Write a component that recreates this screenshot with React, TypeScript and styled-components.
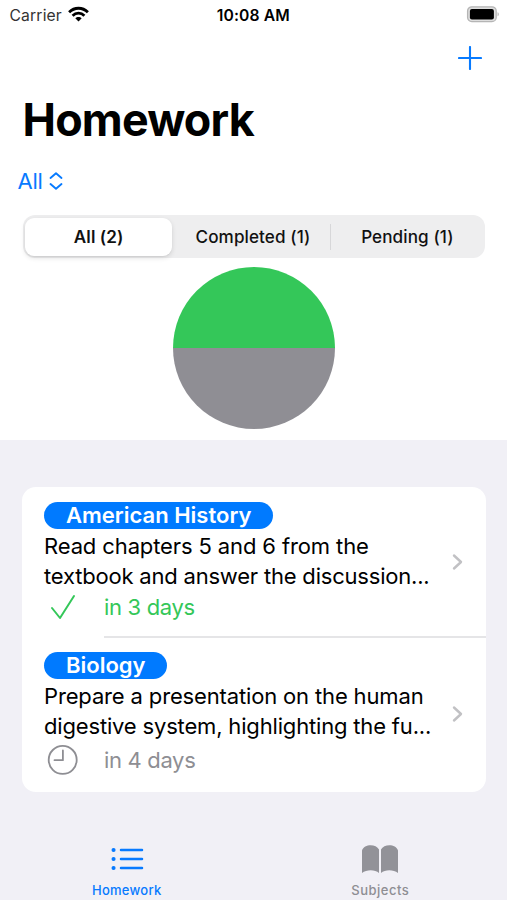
import React from "react";
import styled, { createGlobalStyle } from "styled-components";

const GlobalStyle = createGlobalStyle`
  * { box-sizing: border-box; }
  body { margin: 0; background: #fff; }
`;

const Screen = styled.div`
  width: 507px;
  height: 900px;
  overflow: hidden;
  display: flex;
  flex-direction: column;
  background: #f1f0f6;
  color: #000;
  font-family: Inter, "Liberation Sans", sans-serif;
  white-space: nowrap;
`;

const Top = styled.header`
  height: 440px;
  flex: none;
  display: flex;
  flex-direction: column;
  background: #fff;
`;

const StatusBar = styled.div`
  height: 30px;
  flex: none;
  display: grid;
  grid-template-columns: 1fr auto 1fr;
  align-items: center;
  padding: 0 8px 0 9.5px;
  font-size: 15.7px;
`;

const Carrier = styled.div`
  display: flex;
  align-items: center;
  gap: 6px;
  color: #333;
  letter-spacing: 0.14px;
  svg { margin-bottom: 2px; }
`;

const Time = styled.div`
  font-weight: 600;
  letter-spacing: 0.1px;
  margin-left: -2px;
`;

const Battery = styled.div`
  justify-self: end;
  display: flex;
`;

const Toolbar = styled.div`
  height: 56px;
  flex: none;
  display: flex;
  justify-content: flex-end;
  align-items: center;
  padding-right: 25px;
`;

const PlainButton = styled.button`
  display: flex;
  align-items: center;
  border: 0;
  padding: 0;
  background: none;
  color: #077aff;
  font: inherit;
  letter-spacing: inherit;
`;

const Title = styled.h1`
  margin: 0 0 0 22.5px;
  height: 68px;
  flex: none;
  font-size: 44.8px;
  line-height: 68px;
  font-weight: 700;
  letter-spacing: -0.8px;
`;

const FilterRow = styled.div`
  height: 61px;
  flex: none;
  display: flex;
  padding: 0 0 8px 17.5px;
  font-size: 22px;
  letter-spacing: -0.2px;
  ${PlainButton} { gap: 6px; }
`;

const Segments = styled.div`
  height: 43px;
  flex: none;
  display: flex;
  align-items: center;
  margin: 0 22px 0 23px;
  padding: 2px;
  border-radius: 12px;
  background: #eeeeef;
`;

const Segment = styled.button<{ $selected?: boolean; $width: number; $divided?: boolean }>`
  width: ${(p) => p.$width}px;
  height: ${(p) => (p.$divided ? 26 : 38)}px;
  border: 0;
  border-left: ${(p) => (p.$divided ? "1px solid #d7d7d9" : "0")};
  border-radius: ${(p) => (p.$divided ? 0 : 9)}px;
  background: ${(p) => (p.$selected ? "#fff" : "transparent")};
  box-shadow: ${(p) => (p.$selected ? "0 2px 5px rgba(0,0,0,.12), 0 1px 1px rgba(0,0,0,.04)" : "none")};
  color: #111;
  font: ${(p) => (p.$selected ? 600 : 500)} 17.1px Inter, sans-serif;
  letter-spacing: 0.1px;
  padding: 0 0 1px ${(p) => (p.$selected ? 0 : p.$divided ? 1 : 4)}px;
`;

const Pie = styled.div`
  margin: 9px auto 0 173px;
  width: 162px;
  height: 162px;
  border-radius: 50%;
  background: linear-gradient(#34c759 50%, #8f8e94 50%);
`;

const Card = styled.main`
  flex: none;
  height: 305px;
  margin: 47px 21px 0 22px;
  padding-left: 22px;
  border-radius: 14px;
  background: #fff;
  font-size: 22px;
`;

const Item = styled.article<{ $height: number; $top: number }>`
  height: ${(p) => p.$height}px;
  padding-top: ${(p) => p.$top}px;
  display: flex;
  flex-direction: column;
`;

const Body = styled.div`
  flex: 1;
  display: grid;
  grid-template-columns: 1fr 34px;
  align-content: start;
`;

const ItemText = styled.div`
  display: flex;
  flex-direction: column;
  align-items: flex-start;
`;

const Chevron = styled.div<{ $top: number }>`
  display: flex;
  padding-top: ${(p) => p.$top}px;
`;

const Pill = styled.div<{ $width: number; $spacing: number }>`
  width: ${(p) => p.$width}px;
  height: 27px;
  margin-bottom: 3px;
  padding-left: 22px;
  border-radius: 14px;
  background: #007aff;
  color: #fff;
  font-weight: 600;
  line-height: 27px;
  letter-spacing: ${(p) => p.$spacing}px;
`;

const Line = styled.div<{ $spacing: number }>`
  height: 29.5px;
  line-height: 29.5px;
  letter-spacing: ${(p) => p.$spacing}px;
`;

const Due = styled.div<{ $color: string; $height: number }>`
  height: ${(p) => p.$height}px;
  display: grid;
  grid-template-columns: 60px auto;
  align-items: center;
  color: ${(p) => p.$color};
  letter-spacing: -0.33px;
`;

const DueIcon = styled.div`
  display: flex;
  padding-left: 3px;
`;

const Separator = styled.div`
  height: 2px;
  margin-left: 60px;
  background: #e5e5e7;
`;

const TabBar = styled.nav`
  flex: 1;
  display: grid;
  grid-template-columns: 1fr 1fr;
  padding-top: 50px;
`;

const Tab = styled.button<{ $color: string; $spacing: number }>`
  display: flex;
  flex-direction: column;
  align-items: center;
  gap: 4px;
  padding: 0;
  border: 0;
  background: none;
  color: ${(p) => p.$color};
  font: 500 13px/20px Inter, sans-serif;
  letter-spacing: ${(p) => p.$spacing}px;
`;

const ChevronIcon = () => (
  <svg width="12" height="18" viewBox="0 0 12 18" fill="none" stroke="#c1c1c4" strokeWidth="2.4" strokeLinecap="round" strokeLinejoin="round">
    <path d="M2 2.500L9 9l-7 6.500" />
  </svg>
);

const CheckIcon = () => (
  <svg width="32" height="30" viewBox="0 0 32 30" fill="none" stroke="#34c759" strokeWidth="2" strokeLinecap="round" strokeLinejoin="round">
    <path d="M5 16l8 10L27 4" />
  </svg>
);

const ClockIcon = () => (
  <svg width="32" height="30" viewBox="0 0 32 30" fill="none" stroke="#8e8e93" strokeWidth="1.8" strokeLinecap="round" strokeLinejoin="round">
    <circle cx="15.7" cy="14.900" r="14" />
    <path d="M15.900 5.500V15.200H7.500" />
  </svg>
);

export default function App() {
  return (
    <Screen>
      <GlobalStyle />
      <Top>
        <StatusBar>
          <Carrier>
            Carrier
            <svg width="21" height="16" viewBox="0 0 21 16" fill="none" stroke="#000" strokeWidth="2.8">
              <path d="M1.1 6.2C6.5.9 14.5.9 19.9 6.2" />
              <path d="M4.6 9.7c3.4-3.4 8.4-3.4 11.8 0" />
              <path d="M7.3 12.3c1.8-1.9 4.6-1.9 6.4 0l-3.2 3.2z" fill="#000" stroke="none" />
            </svg>
          </Carrier>
          <Time>10:08 AM</Time>
          <Battery>
            <svg width="33" height="18" viewBox="0 0 33 18">
              <rect x="1.600" y=".8" width="28.600" height="14.800" rx="4.200" fill="#dedede" stroke="#b5b5b5" strokeWidth="1.3" />
              <rect x="3.900" y="3" width="24" height="10.400" rx="2" />
              <path d="M31.600 6.300c1.500.7 1.500 3.300 0 4z" fill="#aaa" />
            </svg>
          </Battery>
        </StatusBar>
        <Toolbar>
          <PlainButton aria-label="Add homework">
            <svg width="24" height="24" viewBox="0 0 24 24" stroke="#077aff" strokeWidth="2.1" strokeLinecap="round">
              <path d="M12 1v22M1 12h22" />
            </svg>
          </PlainButton>
        </Toolbar>
        <Title>Homework</Title>
        <FilterRow>
          <PlainButton>
            All
            <svg width="14" height="18" viewBox="0 0 14 18" fill="none" stroke="#077aff" strokeWidth="1.9" strokeLinecap="round" strokeLinejoin="round">
              <path d="M1.500 6L7 1.300 12.500 6M1.500 12L7 16.700 12.500 12" />
            </svg>
          </PlainButton>
        </FilterRow>
        <Segments>
          <Segment $selected $width={148}>All (2)</Segment>
          <Segment $width={158}>Completed (1)</Segment>
          <Segment $width={154} $divided>Pending (1)</Segment>
        </Segments>
        <Pie />
      </Top>
      <Card>
        <Item $height={151} $top={15}>
          <Body>
            <ItemText>
              <Pill $width={229} $spacing={0}>American History</Pill>
              <Line $spacing={-0.12}>Read chapters 5 and 6 from the</Line>
              <Line $spacing={-0.2}>textbook and answer the discussion...</Line>
              <Due $color="#34c759" $height={32}>
                <DueIcon><CheckIcon /></DueIcon>
                in 3 days
              </Due>
            </ItemText>
            <Chevron $top={51}><ChevronIcon /></Chevron>
          </Body>
          <Separator />
        </Item>
        <Item $height={154} $top={14}>
          <Body>
            <ItemText>
              <Pill $width={123} $spacing={0}>Biology</Pill>
              <Line $spacing={-0.15}>Prepare a presentation on the human</Line>
              <Line $spacing={-0.17}>digestive system, highlighting the fu...</Line>
              <Due $color="#8e8e93" $height={37}>
                <DueIcon><ClockIcon /></DueIcon>
                in 4 days
              </Due>
            </ItemText>
            <Chevron $top={53}><ChevronIcon /></Chevron>
          </Body>
        </Item>
      </Card>
      <TabBar>
        <Tab $color="#077aff" $spacing={0.25}>
          <svg width="34" height="34" viewBox="0 0 34 34" fill="none" stroke="#077aff" strokeWidth="2.5" strokeLinecap="round">
            <path d="M11 8h21M11 17h21M11 26h21" />
            <path d="M3.5 8h.1M3.5 17h.1M3.5 26h.1" strokeWidth="4" />
          </svg>
          Homework
        </Tab>
        <Tab $color="#8e8e93" $spacing={0.5}>
          <svg width="38" height="34" viewBox="0 0 38 34" fill="#929298">
            <path d="M1 8.5C3 1.8 15 1.6 18 7.5V31C14 27.2 5.5 27.2 1 31z" />
            <path d="M20 7.500C23 1.600 35 1.800 37 8.500V31C32.500 27.200 24 27.200 20 31z" />
          </svg>
          Subjects
        </Tab>
      </TabBar>
    </Screen>
  );
}
